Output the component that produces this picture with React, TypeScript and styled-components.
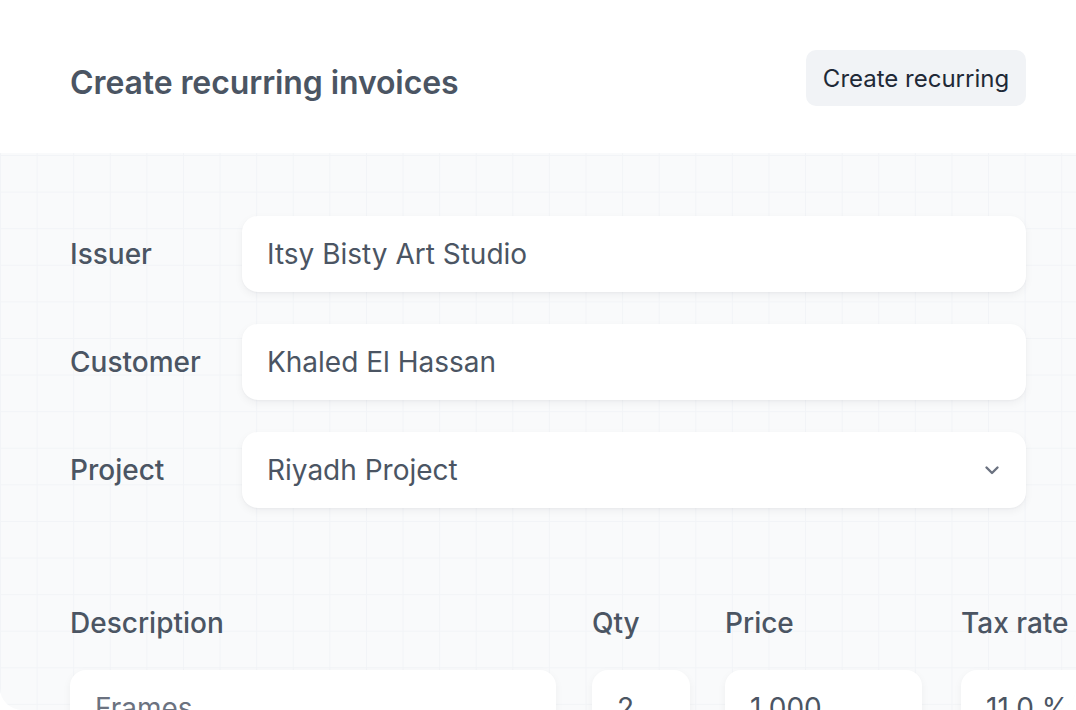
import React from "react";
import styled, { createGlobalStyle } from "styled-components";

const Global = createGlobalStyle`
  html, body { margin: 0; padding: 0; background: #ffffff; }
  body { font-family: Inter, "Noto Sans", sans-serif; -webkit-font-smoothing: antialiased; }
  * { box-sizing: border-box; }
`;

const Card = styled.div`
  width: 1076px;
  height: 710px;
  border-radius: 22px;
  overflow: hidden;
  background: #ffffff;
  display: flex;
  flex-direction: column;
`;

const Header = styled.header`
  height: 153px;
  flex: none;
  display: flex;
  align-items: center;
  justify-content: space-between;
  padding: 0 50px 0 70px;
`;

const Title = styled.h1`
  margin: 0;
  font-size: 32px;
  font-weight: 600;
  color: #4b5563;
  letter-spacing: -0.1px;
  margin-top: 12px;
`;

const HeaderButton = styled.button`
  height: 56px;
  width: 220px;
  padding: 0;
  border: none;
  border-radius: 10px;
  background: #f1f3f6;
  color: #1f2937;
  font-family: inherit;
  font-size: 24px;
  font-weight: 400;
  margin-top: 3px;
`;

const Body = styled.section`
  flex: 1;
  background-color: #f9fafb;
  background-image:
    linear-gradient(to right, #f2f4f7 1px, transparent 1px),
    linear-gradient(to bottom, #f2f4f7 1px, transparent 1px);
  background-size: 36.6px 36.6px;
  background-position: 0 2px;
  padding: 63px 50px 0 70px;
  display: flex;
  flex-direction: column;
`;

const Fields = styled.div`
  display: flex;
  flex-direction: column;
  gap: 32px;
`;

const FieldRow = styled.div`
  display: grid;
  grid-template-columns: 172px 1fr;
  align-items: center;
`;

const Label = styled.span`
  font-size: 28px;
  font-weight: 500;
  color: #4b5563;
`;

const Input = styled.div`
  height: 76px;
  border-radius: 16px;
  background: #ffffff;
  box-shadow: 0 3px 8px rgba(17, 24, 39, 0.05), 0 1px 2px rgba(17, 24, 39, 0.03);
  display: flex;
  align-items: center;
  justify-content: space-between;
  padding: 0 22px 0 25px;
  font-size: 28px;
  color: #4b5563;
`;

const Chevron = styled.svg`
  width: 24px;
  height: 24px;
  color: #6b7280;
`;

const Table = styled.div`
  margin-top: 97px;
  display: grid;
  grid-template-columns: 487px 98px 201px 170px;
  column-gap: 35px;
  row-gap: 29px;
  margin-right: -70px;
`;

const ColHead = styled.span`
  font-size: 28px;
  font-weight: 500;
  color: #4b5563;
  line-height: 36px;
`;

const Cell = styled.div<{ $muted?: boolean; $width?: number }>`
  height: 76px;
  width: ${(p) => (p.$width ? `${p.$width}px` : "auto")};
  border-radius: 16px;
  background: #ffffff;
  box-shadow: 0 3px 8px rgba(17, 24, 39, 0.05);
  display: flex;
  align-items: center;
  padding: 0 24px 0 25px;
  font-size: 28px;
  color: ${(p) => (p.$muted ? "#6b7280" : "#4b5563")};
`;

export default function App() {
  return (
    <>
      <Global />
      <Card>
        <Header>
          <Title>Create recurring invoices</Title>
          <HeaderButton>Create recurring</HeaderButton>
        </Header>
        <Body>
          <Fields>
            <FieldRow>
              <Label>Issuer</Label>
              <Input>Itsy Bisty Art Studio</Input>
            </FieldRow>
            <FieldRow>
              <Label>Customer</Label>
              <Input>Khaled El Hassan</Input>
            </FieldRow>
            <FieldRow>
              <Label>Project</Label>
              <Input>
                Riyadh Project
                <Chevron viewBox="0 0 24 24" fill="none" stroke="currentColor" strokeWidth={2.4} strokeLinecap="round" strokeLinejoin="round">
                  <path d="M6.5 9.5l5.5 5.5 5.5-5.5" />
                </Chevron>
              </Input>
            </FieldRow>
          </Fields>
          <Table>
            <ColHead>Description</ColHead>
            <ColHead>Qty</ColHead>
            <ColHead>Price</ColHead>
            <ColHead>Tax rate</ColHead>
            <Cell $muted $width={486}>Frames</Cell>
            <Cell>2</Cell>
            <Cell $width={197}>1,000</Cell>
            <Cell>11.0 %</Cell>
          </Table>
        </Body>
      </Card>
    </>
  );
}
